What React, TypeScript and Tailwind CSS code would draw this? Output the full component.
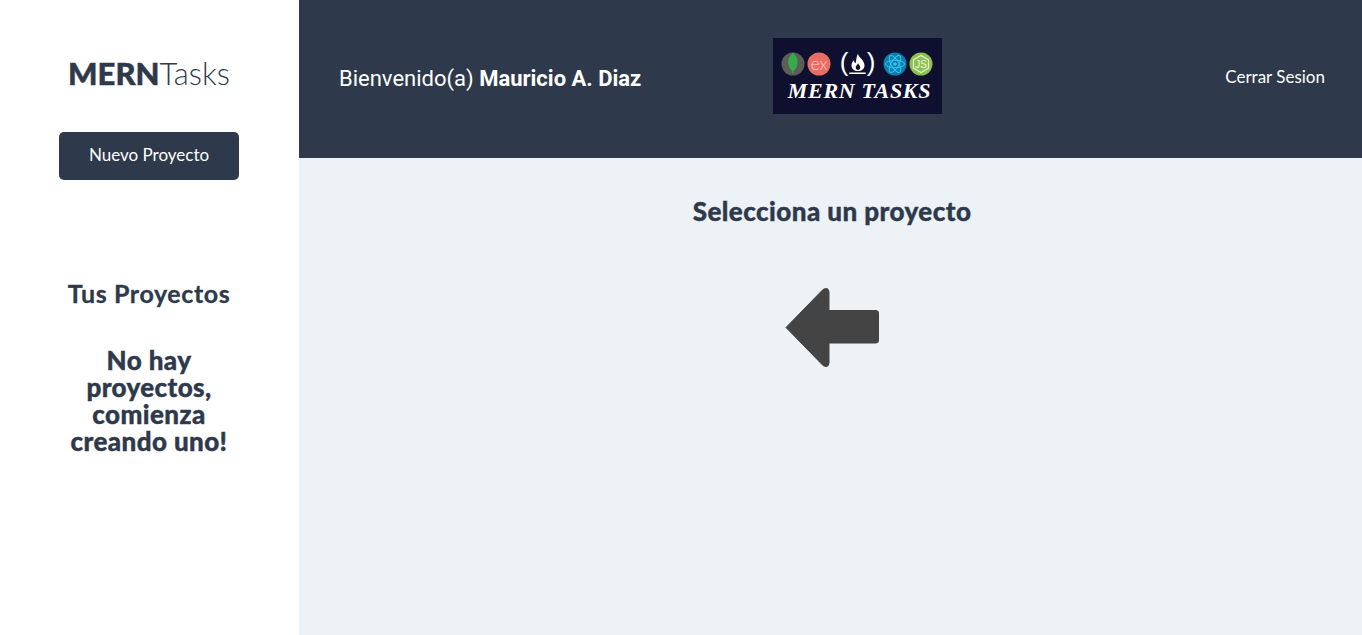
function MernLogo() {
  return (
    <svg width="169" height="76" viewBox="0 0 169 76" className="block">
      <rect width="169" height="76" fill="#0f1030" />
      {/* mongo */}
      <circle cx="20" cy="26" r="11.5" fill="#5d5d58" />
      <path d="M20 14.500c3.600 3.600 5 7.400 4.600 11-.3 3.200-2.200 5.600-4 7.400l-.4 3h-.6l-.4-3c-1.900-1.800-3.800-4.200-4.100-7.400-.3-3.600 1.300-7.400 4.900-11z" fill="#37ab4c" />
      {/* express */}
      <circle cx="46" cy="26" r="11.500" fill="#ea6d64" />
      <text x="46" y="31.500" textAnchor="middle" fontSize="17" fontFamily="Lato, sans-serif" fontWeight="300" fill="#f9d0cb">ex</text>
      {/* freecodecamp */}
      <text x="71" y="33" textAnchor="middle" fontSize="26" fontFamily="'Liberation Sans', sans-serif" fill="#fff">(</text>
      <text x="98" y="33" textAnchor="middle" fontSize="26" fontFamily="'Liberation Sans', sans-serif" fill="#fff">)</text>
      <path d="M85 16c.6 3.500 6.500 6 6.500 11.500 0 3.500-2.800 5.500-6.500 5.500s-6.500-2-6.500-5.500c0-2.200 1-4 2.400-5.200.1 1.600.7 2.600 1.700 3 .8-2.800.6-6.300 2.400-9.800z" fill="#fff" />
      <path d="M85 25c.3 1.500 2.300 2.500 2.300 4.500 0 1.500-1 2.500-2.300 2.500s-2.300-1-2.300-2.500c0-2 1.900-2.800 2.300-4.500z" fill="#0f1030" />
      <rect x="76" y="34.500" width="17" height="1.600" rx="0.800" fill="#fff" />
      {/* react */}
      <circle cx="122" cy="26" r="11.500" fill="#0b7fae" />
      <g fill="none" stroke="#35c4ee" strokeWidth="1">
        <ellipse cx="122" cy="26" rx="9.500" ry="3.800" />
        <ellipse cx="122" cy="26" rx="9.500" ry="3.800" transform="rotate(60 122 26)" />
        <ellipse cx="122" cy="26" rx="9.500" ry="3.800" transform="rotate(120 122 26)" />
      </g>
      <circle cx="122" cy="26" r="1.800" fill="#35c4ee" />
      {/* node */}
      <circle cx="148" cy="26" r="11.500" fill="#8cc152" />
      <path d="M148 17.500l7.500 4.300v8.400l-7.500 4.300-7.500-4.300v-8.400z" fill="none" stroke="#e6f4d0" strokeWidth="1.200" />
      <text x="148" y="30" textAnchor="middle" fontSize="10" fontFamily="'Liberation Sans', sans-serif" fill="#eef8de">JS</text>
      <text x="86.500" y="60" textAnchor="middle" fontSize="22" fontFamily="'Liberation Serif', serif" fontStyle="italic" fontWeight="700" letterSpacing="0.700" fill="#fff">MERN TASKS</text>
    </svg>
  );
}

function BackArrow() {
  return (
    <svg width="94" height="82" viewBox="0 0 94 82" className="block">
      <path
        d="M1 40.500 L38 2.500 Q43.500 -0.500 44 5 L44 23.500 L91 23.500 Q93.500 23.500 93.500 26 L93.500 53.500 Q93.500 56 91 56 L44 56 L44 76 Q43.500 81.500 38 78.500 Z"
        fill="#444444"
        stroke="#444444"
        strokeWidth="1"
        strokeLinejoin="round"
      />
    </svg>
  );
}

export default function App() {
  return (
    <div className="flex min-h-[635px] bg-[#edf2f6] font-['Lato',sans-serif] text-[#2e394b]">
      <aside className="flex w-[299px] shrink-0 flex-col items-center bg-white pt-[52px] pr-[1px]">
        <h1 className="text-[31px] leading-[42px]">
          <span className="font-black [-webkit-text-stroke:0.5px_#2e394b]">MERN</span>
          <span className="font-light">Tasks</span>
        </h1>
        <button className="mt-[38px] h-[48px] w-[180px] rounded-[5px] bg-[#2e394b] pb-[2px] text-[17px] text-white">
          Nuevo Proyecto
        </button>
        <h2 className="mt-[97px] text-[25px] leading-[32px] font-bold tracking-[0.6px] [-webkit-text-stroke:0.3px_#2e394b]">
          Tus Proyectos
        </h2>
        <p className="mt-[38px] w-[190px] text-center text-[26px] leading-[27px] font-black tracking-[0.4px] [-webkit-text-stroke:0.4px_#2e394b]">
          No hay proyectos, comienza creando uno!
        </p>
      </aside>
      <div className="flex min-w-0 flex-1 flex-col">
        <header className="flex h-[158px] items-center bg-[#2e394b] pr-[37px] pb-[2px] pl-[40px] font-['Roboto',sans-serif] text-white">
          <p className="w-[434px] text-[22px]">
            Bienvenido(a) <span className="font-bold">Mauricio A. Diaz</span>
          </p>
          <div className="mb-[4px]">
            <MernLogo />
          </div>
          <a className="mb-[2px] ml-auto font-['Lato',sans-serif] text-[17px]">Cerrar Sesion</a>
        </header>
        <main className="flex flex-col items-center pt-[37px] pl-[3px]">
          <h2 className="text-[26px] leading-[32px] font-black tracking-[0.45px] [-webkit-text-stroke:0.4px_#2e394b]">
            Selecciona un proyecto
          </h2>
          <div className="mt-[60px]">
            <BackArrow />
          </div>
        </main>
      </div>
    </div>
  );
}
